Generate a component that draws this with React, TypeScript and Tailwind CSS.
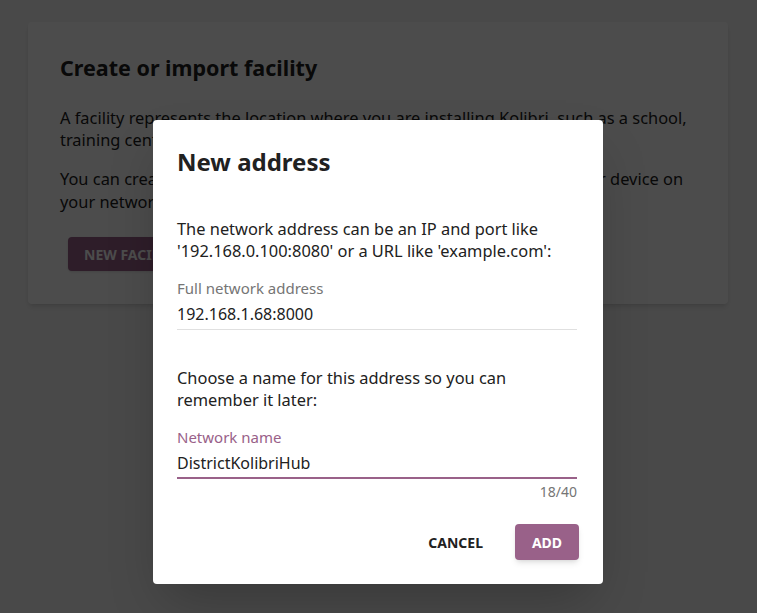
import React from 'react';

const App: React.FC = () => {
  return (
    <div
      className="relative h-[613px] w-[757px] overflow-hidden bg-[#f5f5f5]"
      style={{ fontFamily: '"Noto Sans", sans-serif' }}
    >
      {/* Page behind the modal */}
      <div className="pt-[22px] pl-[28px]">
        <div className="w-[700px] h-[282px] rounded bg-white px-8 pt-[32px] shadow-md">
          <h1 className="text-[21.5px] leading-[28px] font-bold text-[#212121]">Create or import facility</h1>
          <p className="mt-[25px] text-[16.4px] leading-[22px] text-[#212121]">
            A facility represents the location where you are installing Kolibri, such as a school, training center, or a home.
          </p>
          <p className="mt-[16px] text-[16.4px] leading-[23px] text-[#212121]">
            You can create a new facility, or import an existing facility from another device on your network.
          </p>
          <button className="mt-[24px] ml-2 h-[34px] rounded bg-[#996189] px-4 text-[14px] font-bold uppercase text-white shadow">
            New facility
          </button>
        </div>
      </div>

      {/* Backdrop */}
      <div className="absolute inset-0 bg-black/70" />

      {/* Modal */}
      <div className="absolute left-[153px] top-[120px] w-[450px] rounded bg-white pt-[26px] pl-[24px] pr-[24px] pb-[24px] shadow-2xl">
        <h2 className="text-[24px] leading-[32px] font-bold text-[#212121]">New address</h2>
        <div className="mr-[2px]">
          <p className="mt-[40px] text-[16.4px] leading-[22px] text-[#212121]">
            The network address can be an IP and port like '192.168.0.100:8080' or a URL like 'example.com':
          </p>
          <div className="mt-[17px]">
            <div className="text-[15px] leading-[18px] text-[#757575]">Full network address</div>
            <div className="mt-[6px] border-b border-[#e0e0e0] pb-[4px] text-[16px] leading-[22px] text-[#212121]">
              192.168.1.68:8000
            </div>
          </div>
          <p className="mt-[37px] text-[16.4px] leading-[22px] text-[#212121]">
            Choose a name for this address so you can remember it later:
          </p>
          <div className="mt-[17px]">
            <div className="text-[15px] leading-[18px] text-[#996189]">Network name</div>
            <div className="mt-[6px] border-b-2 border-[#996189] pb-[3px] text-[16px] leading-[22px] text-[#212121]">
              DistrictKolibriHub
            </div>
            <div className="mt-[5px] text-right text-[14px] leading-[16px] text-[#757575]">18/40</div>
          </div>
        </div>
        <div className="mt-[24px] flex items-center justify-end gap-[16px]">
          <button className="h-[36px] px-[16px] text-[14px] font-bold uppercase text-[#212121]">Cancel</button>
          <button className="h-[36px] w-[64px] rounded bg-[#996189] text-[14px] font-bold uppercase text-white shadow-md">
            Add
          </button>
        </div>
      </div>
    </div>
  );
};

export default App;
